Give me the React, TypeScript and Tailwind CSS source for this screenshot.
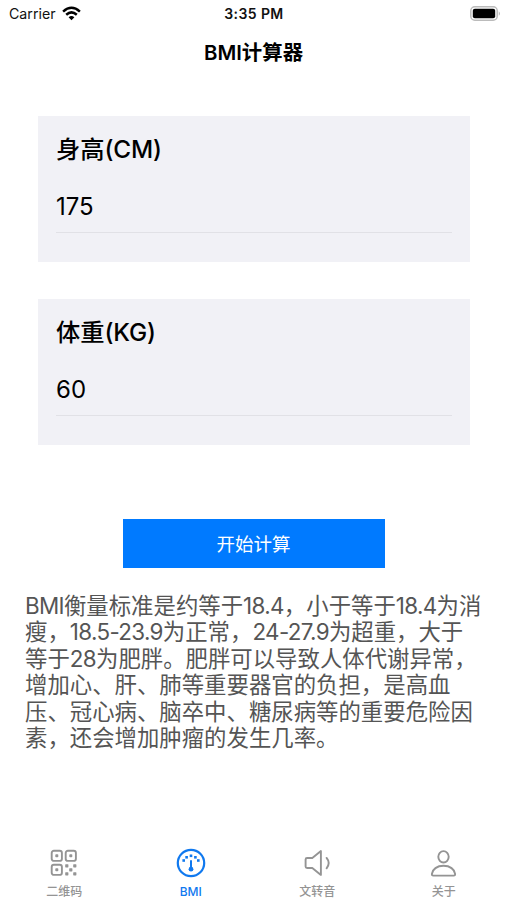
import React, { useState } from "react";

const QrIcon = () => (
  <svg width="28" height="28" viewBox="0 0 28 28" fill="none">
    <g stroke="currentColor" strokeWidth="1.9">
      <rect x="1.7" y="1.7" width="10.2" height="10.2" rx="2.2" />
      <rect x="15.7" y="1.7" width="10.2" height="10.2" rx="2.2" />
      <rect x="1.7" y="15.7" width="10.2" height="10.2" rx="2.2" />
    </g>
    <g fill="currentColor">
      <rect x="5.3" y="5.3" width="3" height="3" rx="0.8" />
      <rect x="19.3" y="5.3" width="3" height="3" rx="0.8" />
      <rect x="5.3" y="19.3" width="3" height="3" rx="0.8" />
      <rect x="15.2" y="15.2" width="3.2" height="3.2" rx="0.6" />
      <rect x="23.2" y="15.2" width="3.2" height="3.2" rx="0.6" />
      <rect x="19.2" y="19.2" width="3.2" height="3.2" rx="0.6" />
      <rect x="15.2" y="23.2" width="3.2" height="3.2" rx="0.6" />
      <rect x="23.2" y="23.2" width="3.2" height="3.2" rx="0.6" />
    </g>
  </svg>
);

const GaugeIcon = () => (
  <svg width="30" height="30" viewBox="0 0 30 30" fill="none">
    <circle cx="15" cy="15" r="13.2" stroke="currentColor" strokeWidth="2.2" />
    <g fill="currentColor">
      <rect x="6.4" y="11.2" width="2.6" height="2.6" />
      <rect x="9.3" y="8" width="2.6" height="2.6" />
      <rect x="13.7" y="6.5" width="2.6" height="2.6" />
      <rect x="18.1" y="8" width="2.6" height="2.6" />
      <rect x="21" y="11.2" width="2.6" height="2.6" />
      <circle cx="15" cy="21.2" r="2.4" />
    </g>
    <path d="M15 12.2v8" stroke="currentColor" strokeWidth="2" />
  </svg>
);

const SpeakerIcon = () => (
  <svg
    width="28"
    height="28"
    viewBox="0 0 28 28"
    fill="none"
    stroke="currentColor"
    strokeWidth="1.9"
    strokeLinecap="round"
    strokeLinejoin="round"
  >
    <path d="M4.1 9h5.2l8.6-6.9v23.8L9.3 19H4.1q-1.5 0-1.5-1.5v-7q0-1.5 1.5-1.5z" />
    <path d="M23.6 8.9q4.2 5.1 0 10.4" />
  </svg>
);

const PersonIcon = () => (
  <svg
    width="28"
    height="28"
    viewBox="0 0 28 28"
    fill="none"
    stroke="currentColor"
    strokeWidth="1.9"
    strokeLinejoin="round"
  >
    <ellipse cx="13.5" cy="7.8" rx="5.2" ry="5.7" />
    <path d="M3.3 26.6q-1.6 0-1.4-1.8c.6-4.5 5-8 11.6-8s11 3.5 11.6 8q.2 1.8-1.4 1.8z" />
  </svg>
);

const tabs = [
  { key: "qr", label: "二维码", icon: <QrIcon /> },
  { key: "bmi", label: "BMI", icon: <GaugeIcon /> },
  { key: "voice", label: "文转音", icon: <SpeakerIcon /> },
  { key: "about", label: "关于", icon: <PersonIcon /> },
];

const description = [
  "BMI衡量标准是约等于18.4，小于等于18.4为消",
  "瘦，18.5-23.9为正常，24-27.9为超重，大于",
  "等于28为肥胖。肥胖可以导致人体代谢异常，",
  "增加心、肝、肺等重要器官的负担，是高血",
  "压、冠心病、脑卒中、糖尿病等的重要危险因",
  "素，还会增加肿瘤的发生几率。",
];

// Latin runs are set a little tighter than the Chinese text
const DescriptionLine: React.FC<{ text: string }> = ({ text }) => (
  <span className="block">
    {text.split(/([A-Z0-9.-]+)/).map((part, i) =>
      i % 2 === 1 ? (
        <span key={i} className="tracking-[-0.65px]">
          {part}
        </span>
      ) : (
        part
      )
    )}
  </span>
);

const StatusBar = () => (
  <div className="grid h-[27px] shrink-0 grid-cols-3 items-center pl-[9px] pr-[6px] text-[#111]">
    <div className="flex items-center gap-[6px] text-[14.2px] leading-none">
      <span className="pt-px">Carrier</span>
      <svg width="19" height="15" viewBox="0 0 19 15" fill="none">
        <g stroke="#000" strokeWidth="2.5">
          <path d="M1.1 5.6q8.4-7.6 16.8 0" />
          <path d="M4.2 8.8q5.3-4.8 10.6 0" />
        </g>
        <path d="M6.6 11.2q2.9-2.4 5.8 0L9.5 14.2z" fill="#000" />
      </svg>
    </div>
    <div className="pr-[2px] text-center text-[14px] font-semibold leading-none tracking-[0.4px]">
      3:35 PM
    </div>
    <div className="flex justify-end">
      <svg width="31" height="15" viewBox="0 0 31 15" fill="none">
        <rect x="0.8" y="0.8" width="26.4" height="13.4" rx="4" stroke="#bbb" strokeWidth="1.5" />
        <rect x="2.8" y="2.8" width="22.4" height="9.4" rx="2" fill="#000" />
        <path d="M28.8 5.2q2 2.3 0 4.6z" fill="#aaa" />
      </svg>
    </div>
  </div>
);

const Field: React.FC<{
  label: string;
  value: string;
  onChange: (value: string) => void;
}> = ({ label, value, onChange }) => (
  <label className="flex h-[146px] flex-col bg-[#f1f1f6] px-[18px] pt-[15px]">
    <span className="text-[24.3px] font-medium leading-[36px] tracking-[-0.1px]">
      {label}
    </span>
    <input
      className="mt-[13px] h-[53px] border-b border-[#e1e1e6] bg-transparent text-[24px] outline-none"
      inputMode="decimal"
      value={value}
      onChange={(e) => onChange(e.target.value)}
    />
  </label>
);

const App: React.FC = () => {
  const [height, setHeight] = useState("175");
  const [weight, setWeight] = useState("60");
  const [active, setActive] = useState("bmi");

  return (
    <div className="flex h-[900px] w-[507px] flex-col overflow-hidden bg-white font-[Inter,'Noto_Sans_CJK_SC',sans-serif] text-black">
      <StatusBar />
      <h1 className="h-[50px] shrink-0 text-center text-[20.4px] font-semibold leading-[52px]">
        BMI计算器
      </h1>

      <main className="flex flex-1 flex-col">
        <div className="mt-[39px] flex flex-col gap-[37px] pl-[38px] pr-[37px]">
          <Field label="身高(CM)" value={height} onChange={setHeight} />
          <Field label="体重(KG)" value={weight} onChange={setWeight} />
        </div>

        <button className="ml-[123px] mt-[74px] h-[49px] w-[262px] bg-[#007aff] pr-px pt-[2px] text-[18.5px] text-white">
          开始计算
        </button>

        <p className="ml-[25px] mt-[25px] whitespace-nowrap text-[22.4px] leading-[26.4px] text-[#555]">
          {description.map((line) => (
            <DescriptionLine key={line} text={line} />
          ))}
        </p>
      </main>

      <nav className="grid h-[54px] shrink-0 grid-cols-4 pl-px">
        {tabs.map((tab) => (
          <button
            key={tab.key}
            onClick={() => setActive(tab.key)}
            className={`flex flex-col items-center ${
              active === tab.key ? "text-[#1079ef]" : "text-[#949494]"
            }`}
          >
            <span className="flex h-[34px] items-center">{tab.icon}</span>
            <span className="mt-[2px] text-[12px] font-medium leading-[19px]">
              {tab.label}
            </span>
          </button>
        ))}
      </nav>
    </div>
  );
};

export default App;
